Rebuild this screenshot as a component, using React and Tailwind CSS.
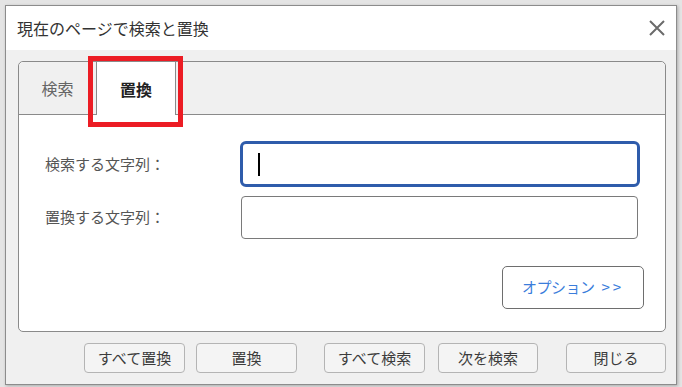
// Find & replace dialog (replace tab active), with a red highlight on the tab
const jp = { fontFamily: '"Noto Sans CJK JP", "Noto Sans", sans-serif' };

function DialogButton({ label, className }) {
  return (
    <button
      className={`h-[30px] rounded-[4px] border border-[#b4b4b4] bg-[#f4f4f4] text-[15px] text-[#3c3c3c] ${className}`}
    >
      {label}
    </button>
  );
}

export default function App() {
  return (
    <div className="relative w-[682px] h-[387px] bg-[#e4e4e4] pt-[5px] pl-[5px] overflow-hidden" style={jp}>
      {/* Dialog window */}
      <div className="flex flex-col w-[672px] h-[380px] border border-[#8c8c8c] bg-[#f0f0f0] shadow-[1px_1px_3px_rgba(0,0,0,0.25)]">
        {/* Title bar */}
        <div className="flex items-center justify-between h-[44px] bg-white pl-[11px] pr-[11px]">
          <span className="text-[16px] text-[#333]">現在のページで検索と置換</span>
          <svg width="16" height="16" viewBox="0 0 16 16" className="text-[#6b6b6b]">
            <path d="M1 1 L15 15 M15 1 L1 15" stroke="currentColor" strokeWidth="2" fill="none" />
          </svg>
        </div>

        {/* Body */}
        <div className="flex flex-col pl-[12px] pt-[11px]">
          {/* Tab frame */}
          <div className="flex flex-col w-[648px] h-[271px] border border-[#8a8a8a] rounded-[5px] bg-white">
            {/* Tab header */}
            <div className="flex h-[53px] rounded-t-[5px]">
              <div className="flex items-center justify-center w-[77px] bg-[#f0f0f0] border-b border-[#8a8a8a] rounded-tl-[5px] text-[16px] text-[#666]">
                検索
              </div>
              <div className="flex items-center justify-center w-[80px] bg-white border-x border-[#8a8a8a] text-[16px] font-bold text-[#222]">
                置換
              </div>
              <div className="flex-1 bg-[#f0f0f0] border-b border-[#8a8a8a] rounded-tr-[5px]" />
            </div>

            {/* Tab content */}
            <div className="flex flex-col pt-[26px]">
              <div className="flex items-center">
                <span className="w-[221px] pl-[26px] text-[15px] text-[#555]">検索する文字列：</span>
                <div className="flex items-center w-[400px] h-[46px] border-[3px] border-[#2f5cab] rounded-[6px] pl-[15px]">
                  <div className="w-[2px] h-[23px] bg-black" />
                </div>
              </div>
              <div className="flex items-center mt-[9px]">
                <span className="w-[222px] pl-[26px] text-[15px] text-[#555]">置換する文字列：</span>
                <div className="w-[397px] h-[43px] border border-[#7a7a7a] rounded-[4px]" />
              </div>
              <div className="flex justify-end mt-[27px] pr-[21px]">
                <button className="flex items-center justify-center w-[142px] h-[43px] border border-[#6e6e6e] rounded-[5px] bg-white text-[15px] text-[#3b7ddb]">
                  <span className="tracking-[-0.5px]">オプション</span>
                  <span className="ml-[7px] tracking-[3px]">&gt;&gt;</span>
                </button>
              </div>
            </div>
          </div>

          {/* Bottom buttons */}
          <div className="flex mt-[11px] pl-[66px]">
            <DialogButton label="すべて置換" className="w-[101px]" />
            <DialogButton label="置換" className="w-[101px] ml-[11px]" />
            <DialogButton label="すべて検索" className="w-[101px] ml-[27px]" />
            <DialogButton label="次を検索" className="w-[100px] ml-[13px]" />
            <DialogButton label="閉じる" className="w-[100px] ml-[28px]" />
          </div>
        </div>
      </div>

      {/* Red highlight annotation */}
      <div className="absolute left-[88px] top-[56px] w-[95px] h-[71px] border-[5px] border-[#ec1c24]" />
    </div>
  );
}
